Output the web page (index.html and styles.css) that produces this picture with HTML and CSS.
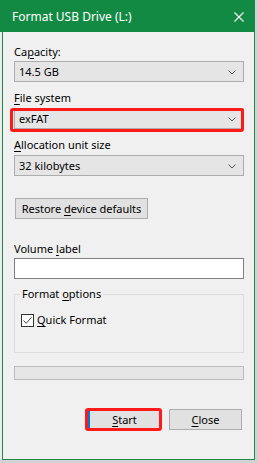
FILE: index.html
```html
<!DOCTYPE html>
<html lang="en">
<head>
<meta charset="utf-8">
<title>Format USB Drive (L:)</title>
<link rel="stylesheet" href="styles.css">
</head>
<body>
<div class="window">
  <div class="titlebar">
    <span class="title">Format USB Drive (L:)</span>
    <svg class="close" width="10" height="10" viewBox="0 0 10 10"><path d="M0.5 0.5 L9.5 9.5 M9.5 0.5 L0.5 9.5" stroke="#fff" stroke-width="1.1" fill="none"/></svg>
  </div>
  <div class="client">
    <div class="label lbl-first">Ca<u>p</u>acity:</div>
    <div class="select"><span>14.5 GB</span><svg class="chev" width="8" height="5" viewBox="0 0 8 5"><path d="M0.5 0.5 L4 4 L7.5 0.5" stroke="#555" stroke-width="1" fill="none"/></svg></div>

    <div class="label lbl-gap"><u>F</u>ile system</div>
    <div class="select select-mark"><span>exFAT</span><svg class="chev" width="8" height="5" viewBox="0 0 8 5"><path d="M0.5 0.5 L4 4 L7.5 0.5" stroke="#555" stroke-width="1" fill="none"/></svg><div class="mark mark-fs"></div></div>

    <div class="label lbl-gap"><u>A</u>llocation unit size</div>
    <div class="select"><span>32 kilobytes</span><svg class="chev" width="8" height="5" viewBox="0 0 8 5"><path d="M0.5 0.5 L4 4 L7.5 0.5" stroke="#555" stroke-width="1" fill="none"/></svg></div>

    <div class="restore-row"><button class="btn restore">Restore <u>d</u>evice defaults</button></div>

    <div class="label lbl-vol">Volume <u>l</u>abel</div>
    <div class="input"></div>

    <fieldset class="group">
      <legend>Format <u>o</u>ptions</legend>
      <div class="check-row">
        <span class="checkbox"><svg width="11" height="11" viewBox="0 0 11 11"><path d="M1.5 5.5 L4.2 8.3 L9.6 2.2" stroke="#444" stroke-width="1" fill="none"/></svg></span>
        <span class="check-label"><u>Q</u>uick Format</span>
      </div>
    </fieldset>

    <div class="progress"></div>

    <div class="actions">
      <button class="btn action start"><u>S</u>tart<span class="mark mark-start"></span></button>
      <button class="btn action"><u>C</u>lose</button>
    </div>
  </div>
</div>
</body>
</html>
```
FILE: styles.css
```css
* { box-sizing: border-box; }
html, body { margin: 0; padding: 0; }
body {
  width: 258px;
  height: 463px;
  background: #d2d2d2;
  font-family: "Noto Sans", "DejaVu Sans", sans-serif;
  font-size: 11px;
  color: #000;
  overflow: hidden;
}
.window {
  width: 256px;
  display: flex;
  flex-direction: column;
}
.titlebar {
  height: 32px;
  width: 255px;
  background: #138a44;
  display: flex;
  align-items: center;
  justify-content: space-between;
  padding: 0 11px 0 12px;
  color: #fff;
}
.title { font-size: 12px; line-height: 16px; padding-top: 1px; }
.close { display: block; margin-top: 1px; }
.client {
  margin-left: 2px;
  width: 253px;
  height: 428px;
  background: #f0f0f0;
  border: 1px solid #1d8a48;
  border-top: 0;
  padding: 0 10px 0 11px;
  display: flex;
  flex-direction: column;
  box-shadow: -2px 0 0 #ececec;
}
u { text-decoration: underline; text-underline-offset: 2px; text-decoration-thickness: 1px; }
.label { line-height: 16px; height: 16px; }
.lbl-first { margin-top: 12px; margin-bottom: 1px; }
.lbl-gap { margin-top: 8px; margin-bottom: 2px; }
.lbl-vol { margin-top: 22px; margin-bottom: 1px; }
.select {
  position: relative;
  height: 21px;
  background: #e5e5e5;
  border: 1px solid #adadad;
  padding: 0 4px;
  display: flex;
  align-items: center;
  justify-content: space-between;
  line-height: 16px;
}
.select span { padding-top: 1px; }
.chev { display: block; margin-right: 3px; margin-top: 1px; }
.mark {
  position: absolute;
  border: 3px solid #ff1a1a;
  border-radius: 3px;
  pointer-events: none;
}
.mark-fs { top: -1px; left: -5px; right: -1px; bottom: -4px; }
.restore-row { margin-top: 22px; padding-left: 1px; display: flex; }
.btn {
  font-family: inherit;
  font-size: 11px;
  color: #000;
  background: #e1e1e1;
  border: 1px solid #adadad;
  height: 21px;
  line-height: 16px;
  padding: 0;
  margin: 0;
}
.restore { width: 133px; }
.input {
  height: 21px;
  background: #fff;
  border: 1px solid #7f7f7f;
}
.group {
  margin: 7px 0 0 0;
  padding: 0 5px;
  border: 1px solid #dcdcdc;
  height: 67px;
  min-width: 0;
}
.group legend {
  padding: 0 2px;
  line-height: 16px;
  margin-left: 0;
}
.check-row {
  display: flex;
  align-items: center;
  margin-top: 10px;
  padding-left: 1px;
  line-height: 16px;
}
.checkbox {
  width: 13px;
  height: 13px;
  border: 1px solid #333;
  background: #fff;
  display: flex;
  align-items: center;
  justify-content: center;
  margin-right: 3px;
}
.checkbox svg { display: block; }
.progress {
  margin-top: 13px;
  height: 14px;
  background: #e6e6e6;
  border: 1px solid #bcbcbc;
}
.actions {
  margin-top: 29px;
  display: flex;
  justify-content: flex-end;
  gap: 8px;
  padding-right: 2px;
}
.action { width: 73px; }
.start {
  position: relative;
  border: 1px solid #0078d7;
  box-shadow: inset 1px 0 0 #0078d7;
}
.mark-start { top: -2px; left: -4px; right: -2px; bottom: -2px; }
```
